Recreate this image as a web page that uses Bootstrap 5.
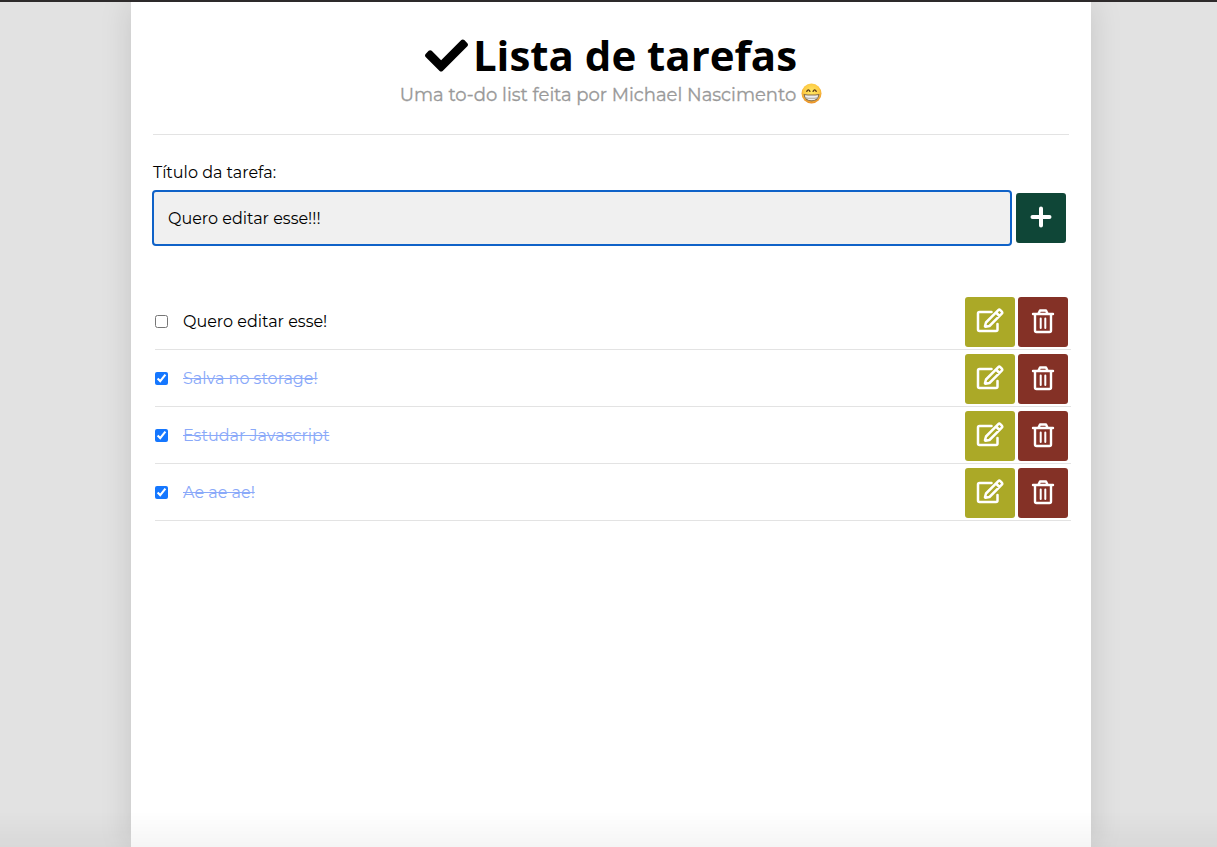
<!DOCTYPE html>
<html lang="pt-BR">
<head>
<meta charset="utf-8">
<meta name="viewport" content="width=device-width, initial-scale=1">
<title>Lista de tarefas</title>
<link href="https://cdn.jsdelivr.net/npm/bootstrap@5.3.0/dist/css/bootstrap.min.css" rel="stylesheet">
<style>
body{font-family:Montserrat,Inter,sans-serif;font-size:16px;line-height:24px;color:#000;background:#e2e2e2;border-top:2px solid #2d2a2b;padding-left:5px}
.page-fade{background:linear-gradient(to top,rgba(0,0,0,.04),transparent 36px);height:36px}
.sheet{max-width:960px;background:#fff;box-shadow:0 0 30px rgba(0,0,0,.13)}
.sheet-head{margin:0 22px;padding:28px 0 24px;border-bottom:1px solid #e3e3e3}
.title{font:700 42px/50px "Open Sans",sans-serif;gap:5px}
.subtitle{font-size:18px;line-height:30px;font-weight:400;color:#999;-webkit-text-stroke:.3px #999;gap:5px}
.task-form{padding:26px 25px 0 21px}
.task-label{margin:0 0 5px 1px}
.task-input{height:56px;border:2px solid #0f62c8;border-radius:4px;background:#f0f0f0;padding:0 14px;color:#000;font-size:16px;outline:0}
.task-input:focus{background:#f0f0f0;border-color:#0f62c8;box-shadow:none;color:#000}
.act{width:50px;height:50px;border:0;border-radius:3px;padding:0;color:#fff;flex:none}
.act-add{background:#0f4637}
.act-edit{background:#aba927}
.act-del{background:#843126}
.act svg{margin-bottom:2px}
.task-actions{gap:3px}
.tasks{margin:47px 20px 0 24px}
.task{height:57px;border-bottom:1px solid #e3e3e3;padding:4px 3px 2px 0}
.task input{width:13px;height:13px;margin:0 15px 2px 0;accent-color:#1577ff}
.task label{padding-bottom:1px}
.task input:checked+label{color:#8aa9f9;text-decoration:line-through}
</style>
</head>
<body class="min-vh-100 d-flex flex-column">
<main class="sheet container-fluid p-0 flex-grow-1">
  <header class="sheet-head text-center">
    <h1 class="title d-flex justify-content-center align-items-center m-0">
      <svg width="43" height="43" viewBox="0 0 512 512" fill="currentColor" aria-hidden="true"><path d="M173.9 439.4 7.5 273c-10-10-10-26.200 0-36.200l36.200-36.200c10-10 26.200-10 36.200 0L192 312.700 432.100 72.600c10-10 26.200-10 36.200 0l36.200 36.200c10 10 10 26.200 0 36.200L210.100 439.400c-10 10-26.200 10-36.200 0z"/></svg>
      <span>Lista de tarefas</span>
    </h1>
    <p class="subtitle d-flex justify-content-center align-items-center m-0">
      <span>Uma to-do list feita por Michael Nascimento</span>
      <svg width="21" height="21" viewBox="0 0 40 40" class="mb-1" role="img" aria-label="Rosto sorridente">
        <defs><radialGradient id="face" cx=".5" cy=".4" r=".6"><stop offset="0" stop-color="#ffe865"/><stop offset=".65" stop-color="#fdcb45"/><stop offset="1" stop-color="#e88a24"/></radialGradient></defs>
        <circle cx="20" cy="20" r="19" fill="url(#face)"/>
        <path d="M11 16q3-6 6 0M23 16q3-6 6 0" fill="none" stroke="#5b3a14" stroke-width="2.500" stroke-linecap="round"/>
        <path d="M6 22q14 2 28 0q-1 12-14 12T6 22z" fill="#eee" stroke="#8b7048" stroke-width="2"/>
        <path d="M8 28q12 2 24 0" fill="none" stroke="#a9a49c" stroke-width="2"/>
      </svg>
    </p>
  </header>
  <form class="task-form" onsubmit="return false">
    <label for="titulo" class="task-label d-block">Título da tarefa:</label>
    <div class="d-flex align-items-center gap-1">
      <input id="titulo" type="text" class="form-control task-input" value="Quero editar esse!!!">
      <button type="submit" class="act act-add" aria-label="Adicionar"><svg width="22" height="22" viewBox="0 0 22 22" fill="none" stroke="currentColor" stroke-width="4" stroke-linecap="round" aria-hidden="true"><path d="M11 2.500v17M2.500 11h17"/></svg></button>
    </div>
  </form>
  <svg class="d-none" aria-hidden="true">
    <symbol id="edit" viewBox="0 0 28 28"><g fill="none" stroke="currentColor" stroke-width="2.500" stroke-linejoin="round" stroke-linecap="round"><path d="M15.500 5H3.500Q2 5 2 6.500v16Q2 24 3.500 24h16.500q1.500 0 1.500-1.500V17"/><path d="M10 15.500 22.300 3.200q1-1 2 0l1.500 1.500q1 1 0 2L13.500 19l-4 .8q-.6 0-.5-.7zM20 5.500l3.500 3.500"/></g></symbol>
    <symbol id="trash" viewBox="0 0 24 26"><g fill="none" stroke="currentColor" stroke-width="2.400" stroke-linejoin="round" stroke-linecap="round"><path d="M2 6h20M4 6v16.500Q4 24 5.500 24h13q1.500 0 1.500-1.500V6M7.500 5.500 9 2.500h6l1.500 3"/><path stroke-width="2" d="M9.700 10.500v9.500M14.300 10.500v9.500"/></g></symbol>
  </svg>
  <ul class="tasks list-unstyled mb-0">
    <li class="task d-flex align-items-center">
      <input type="checkbox" id="t1"><label for="t1" class="flex-grow-1">Quero editar esse!</label>
      <div class="task-actions d-flex"><button class="act act-edit" aria-label="Editar"><svg width="28" height="28"><use href="#edit"/></svg></button><button class="act act-del" aria-label="Excluir"><svg width="24" height="26"><use href="#trash"/></svg></button></div>
    </li>
    <li class="task d-flex align-items-center">
      <input type="checkbox" id="t2" checked><label for="t2" class="flex-grow-1">Salva no storage!</label>
      <div class="task-actions d-flex"><button class="act act-edit" aria-label="Editar"><svg width="28" height="28"><use href="#edit"/></svg></button><button class="act act-del" aria-label="Excluir"><svg width="24" height="26"><use href="#trash"/></svg></button></div>
    </li>
    <li class="task d-flex align-items-center">
      <input type="checkbox" id="t3" checked><label for="t3" class="flex-grow-1">Estudar Javascript</label>
      <div class="task-actions d-flex"><button class="act act-edit" aria-label="Editar"><svg width="28" height="28"><use href="#edit"/></svg></button><button class="act act-del" aria-label="Excluir"><svg width="24" height="26"><use href="#trash"/></svg></button></div>
    </li>
    <li class="task d-flex align-items-center">
      <input type="checkbox" id="t4" checked><label for="t4" class="flex-grow-1">Ae ae ae!</label>
      <div class="task-actions d-flex"><button class="act act-edit" aria-label="Editar"><svg width="28" height="28"><use href="#edit"/></svg></button><button class="act act-del" aria-label="Excluir"><svg width="24" height="26"><use href="#trash"/></svg></button></div>
    </li>
  </ul>
</main>
<div class="page-fade fixed-bottom pe-none"></div>
<script src="https://cdn.jsdelivr.net/npm/bootstrap@5.3.0/dist/js/bootstrap.bundle.min.js"></script>
</body>
</html>
